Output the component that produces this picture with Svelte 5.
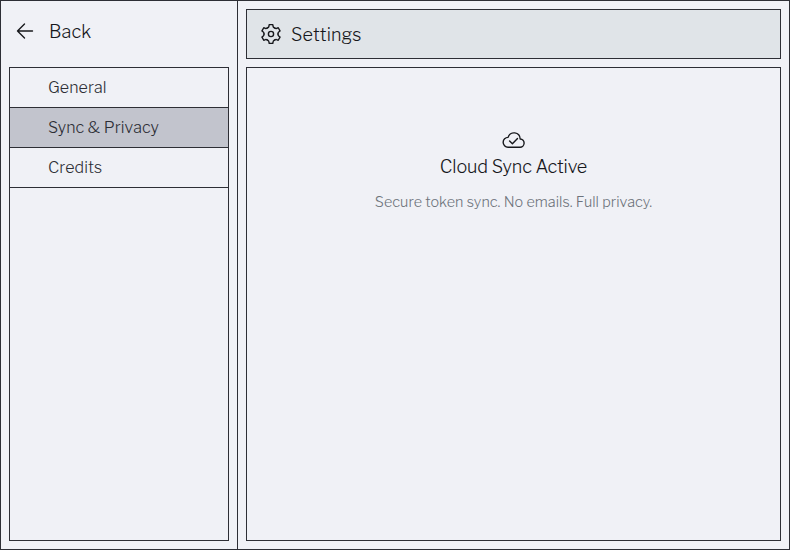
<script>
  const items = ['General', 'Sync & Privacy', 'Credits'];
  let selected = $state(1);
  const teeth = [0, 60, 120, 180, 240, 300];
</script>

<div class="window">
  <aside>
    <button class="back">
      <svg width="18" height="18" viewBox="0 0 18 18"><path d="M16.5 9H1.5M8.5 2L1.5 9l7 7" /></svg>
      <span>Back</span>
    </button>
    <nav>
      {#each items as item, i}
        <button class:selected={i === selected} onclick={() => (selected = i)}>{item}</button>
      {/each}
    </nav>
  </aside>
  <main>
    <header>
      <svg width="22" height="22" viewBox="-11 -11 22 22">
        {#each teeth as angle}
          <path transform="rotate({angle})" d="M-3.5-6.06C-2.7-6.5-2.2-6.9-2.1-7.7L-1.8-9.4H1.8L2.1-7.7C2.2-6.9 2.7-6.5 3.5-6.06" />
        {/each}
        <circle r="2.6" />
      </svg>
      <h1>Settings</h1>
    </header>
    <section>
      <svg width="24" height="18" viewBox="0 0 24 18">
        <path d="M6 16.2h11.8a4.1 4.1 0 0 0 .4-8.2A6.2 6.5 0 0 0 6.1 6.4 4.9 4.9 0 0 0 6 16.2z" />
        <path d="M7.6 10.1l2.8 2.7 5.1-5.4" />
      </svg>
      <h2>Cloud Sync Active</h2>
      <p>Secure token sync. No emails. Full privacy.</p>
    </section>
  </main>
</div>

<style>
  :global(body) { margin: 0; }
  .window {
    box-sizing: border-box;
    width: 100vw;
    height: 100vh;
    display: flex;
    border: 1px solid #2d2e35;
    background: #f0f1f6;
    color: #17181c;
    font-family: "Libre Franklin", Inter, sans-serif;
    font-weight: 300;
  }
  svg { flex: none; fill: none; stroke: #17181c; stroke-width: 1.4; stroke-linecap: round; stroke-linejoin: round; }
  button { font: inherit; color: inherit; background: none; border: 0; padding: 0; text-align: left; }
  aside {
    box-sizing: border-box;
    width: 237px;
    padding: 8px;
    display: flex;
    flex-direction: column;
    border-right: 1px solid #2d2e35;
  }
  .back { height: 44px; margin-bottom: 14px; padding-left: 7px; display: flex; align-items: center; gap: 15px; font-size: 18px; letter-spacing: .1px; }
  .back span { padding-top: 1px; }
  nav { flex: 1; display: flex; flex-direction: column; border: 1px solid #2d2e35; }
  nav button { box-sizing: border-box; height: 40px; padding-left: 38px; border-bottom: 1px solid #2d2e35; font-size: 16px; letter-spacing: .1px; color: #2d2e35; }
  .selected { background: #c2c4cd; }
  main { flex: 1; padding: 8px; display: flex; flex-direction: column; gap: 8px; }
  header { box-sizing: border-box; height: 50px; padding-left: 13px; display: flex; align-items: center; gap: 9px; border: 1px solid #2d2e35; background: #e0e4e8; }
  h1, h2, p { margin: 0; font-weight: 300; }
  h1 { padding-top: 1px; font-size: 18px; letter-spacing: .15px; }
  section { flex: 1; padding-top: 63px; display: flex; flex-direction: column; align-items: center; border: 1px solid #2d2e35; }
  h2 { margin-top: 6px; font-size: 18px; line-height: 24px; letter-spacing: -.1px; }
  p { margin-top: 13px; font-size: 14.4px; line-height: 20px; letter-spacing: .04px; color: #6d737b; }
</style>
